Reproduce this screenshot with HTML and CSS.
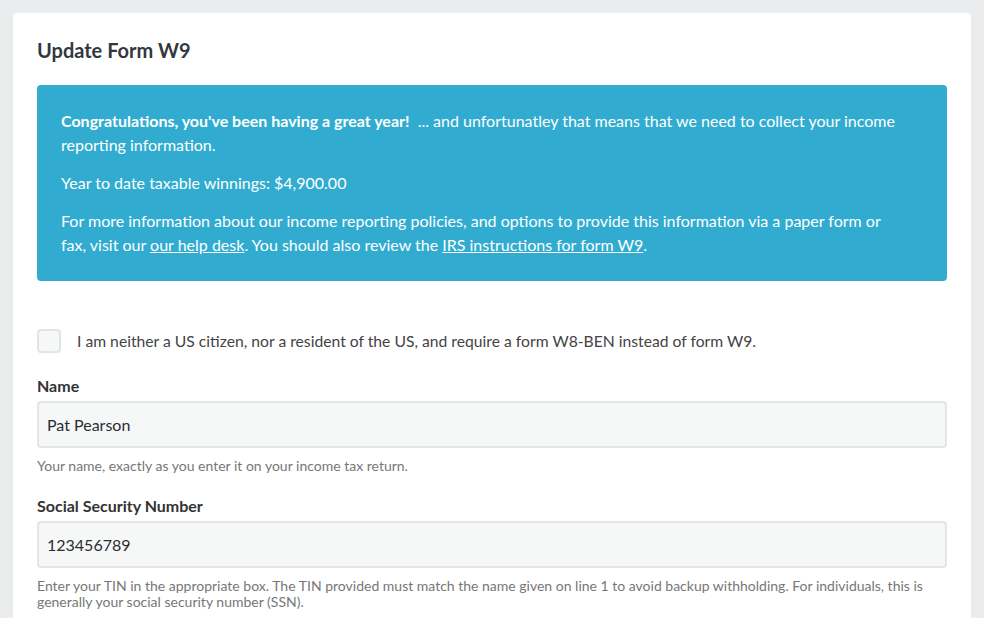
FILE: index.html
```html
<!DOCTYPE html>
<html>
<head>
<meta charset="utf-8">
<link rel="stylesheet" href="styles.css">
</head>
<body>
<div class="card">
  <h1 class="title">Update Form W9</h1>
  <div class="alert">
    <p><strong>Congratulations, you've been having a great year!</strong>&nbsp; ... and unfortunatley that means that we need to collect your income reporting information.</p>
    <p>Year to date taxable winnings: $4,900.00</p>
    <p>For more information about our income reporting policies, and options to provide this information via a paper form or fax, visit our <a href="#">our help desk</a>. You should also review the <a href="#">IRS instructions for form W9</a>.</p>
  </div>
  <label class="check-row">
    <span class="checkbox"></span>
    <span class="check-label">I am neither a US citizen, nor a resident of the US, and require a form W8-BEN instead of form W9.</span>
  </label>
  <div class="field">
    <div class="field-label">Name</div>
    <div class="input">Pat Pearson</div>
    <div class="help">Your name, exactly as you enter it on your income tax return.</div>
  </div>
  <div class="field">
    <div class="field-label">Social Security Number</div>
    <div class="input">123456789</div>
    <div class="help">Enter your TIN in the appropriate box. The TIN provided must match the name given on line 1 to avoid backup withholding. For individuals, this is generally your social security number (SSN).</div>
  </div>
</div>
</body>
</html>
```
FILE: styles.css
```css
html, body {
  margin: 0;
  padding: 0;
}
body {
  background: #ebecee;
  font-family: Lato, "Liberation Sans", sans-serif;
  color: #333;
  padding: 13px 13px 0 13px;
  height: 618px;
  box-sizing: border-box;
  overflow: hidden;
}
.card {
  background: #fff;
  border-radius: 4px;
  padding: 24px 24px 40px 24px;
  box-shadow: 0 1px 2px rgba(0,0,0,0.06);
}
.title {
  margin: 0;
  font-size: 20px;
  font-weight: 700;
  line-height: 26px;
  color: #333840;
}
.alert {
  margin-top: 22px;
  background: #31acd0;
  border-radius: 4px;
  padding: 24px 50px 24px 24px;
  color: #fff;
  font-size: 16px;
  line-height: 24px;
}
.alert p {
  margin: 0 0 14px 0;
}
.alert p:last-child {
  margin-bottom: 0;
}
.alert a {
  color: #fff;
  text-decoration: underline;
}
.check-row {
  display: flex;
  align-items: center;
  gap: 16px;
  margin-top: 48px;
}
.checkbox {
  width: 24px;
  height: 24px;
  box-sizing: border-box;
  border: 2px solid #e3e4e4;
  border-radius: 4px;
  background: #f6f7f7;
  flex: none;
}
.check-label {
  font-size: 15.7px;
  color: #444;
  line-height: 24px;
}
.field {
  margin-top: 23px;
}
.field + .field {
  margin-top: 22px;
}
.field-label {
  font-size: 16px;
  font-weight: 700;
  line-height: 20px;
  color: #333;
}
.input {
  margin-top: 5px;
  height: 47px;
  box-sizing: border-box;
  border: 2px solid #e4e5e5;
  border-radius: 4px;
  background: #f6f7f7;
  padding: 0 8px;
  display: flex;
  align-items: center;
  font-size: 16px;
  color: #2a2d33;
}
.help {
  margin-top: 10px;
  font-size: 14px;
  line-height: 16px;
  color: #777;
}
```
